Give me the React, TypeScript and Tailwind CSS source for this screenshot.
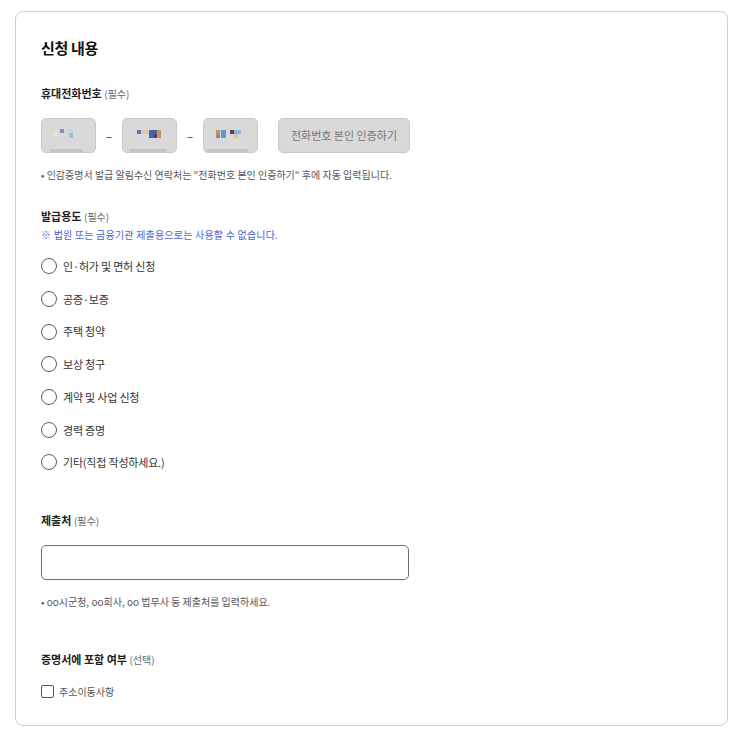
import React from 'react';

const font = { fontFamily: '"Noto Sans CJK KR", "Noto Sans", sans-serif' };

type Px = [number, number, number, number, string];

// blurred / redacted number previews inside the phone fields
const blur: { px: Px[]; line: [number, number] }[] = [
    {
        px: [
            [12, 12, 4, 5, '#ebe3c6'],
            [18, 10, 4, 4, '#9d86b6'],
            [25, 10, 6, 4, '#b9dde3'],
            [27, 14, 4, 5, '#8fc8d6'],
        ],
        line: [8, 41],
    },
    {
        px: [
            [14, 11, 4, 4, '#4f77b8'],
            [18, 11, 8, 4, '#e2c7a0'],
            [26, 11, 8, 4, '#3d64a3'],
            [26, 15, 4, 4, '#3f68b0'],
            [30, 15, 4, 4, '#7a3474'],
            [34, 11, 4, 8, '#c99657'],
        ],
        line: [6, 44],
    },
    {
        px: [
            [12, 11, 4, 5, '#c49056'],
            [12, 16, 4, 3, '#8a8a8a'],
            [17, 11, 5, 8, '#5e98d2'],
            [26, 11, 4, 4, '#7d2f58'],
            [30, 11, 7, 4, '#83b6e2'],
            [30, 15, 4, 4, '#e6c58c'],
        ],
        line: [2, 44],
    },
];

function BlurBox({ px, line }: { px: Px[]; line: [number, number] }) {
    return (
        <div className="h-[35px] w-[55px] overflow-hidden rounded-[5px] border border-[#c9c9c9] bg-[#d9d9d9]">
            <svg width="55" height="35" viewBox="0 0 55 35" className="block">
                {px.map(([x, y, w, h, c], i) => (
                    <rect key={i} x={x} y={y} width={w} height={h} fill={c} />
                ))}
                <rect x={line[0]} y={30} width={line[1] - line[0]} height={3} fill="#c6c6c6" />
            </svg>
        </div>
    );
}

const purposes = ['인·허가 및 면허 신청', '공증·보증', '주택 청약', '보상 청구', '계약 및 사업 신청', '경력 증명', '기타(직접 작성하세요.)'];

function Label({ title, note }: { title: string; note: string }) {
    return (
        <p className="text-[11px] leading-[16px] font-bold text-[#222]">
            {title} <span className="text-[10px] font-normal text-[#666]">({note})</span>
        </p>
    );
}

export default function App() {
    return (
        <div className="min-h-[733px] bg-white pt-[11px] pl-[15px]" style={font}>
            <div className="w-[713px] rounded-[8px] border border-[#cfcfcf] px-[25px] pt-[26px] pb-[25px]">
                {/* Title */}
                <h2 className="text-[15px] leading-[20px] font-bold text-[#111] tracking-[-0.3px]">신청 내용</h2>

                {/* Phone */}
                <div className="mt-[27px]">
                    <Label title="휴대전화번호" note="필수" />
                    <div className="mt-[16px] flex items-center">
                        <BlurBox {...blur[0]} />
                        <span className="w-[26px] text-center text-[12px] text-[#333]">–</span>
                        <BlurBox {...blur[1]} />
                        <span className="w-[26px] text-center text-[12px] text-[#333]">–</span>
                        <BlurBox {...blur[2]} />
                        <button className="ml-[20px] h-[35px] w-[132px] rounded-[5px] border border-[#c9c9c9] bg-[#d9d9d9] text-[11px] text-[#767676]">
                            전화번호 본인 인증하기
                        </button>
                    </div>
                    <p className="mt-[15px] text-[10px] leading-[14px] text-[#555]">
                        • 인감증명서 발급 알림수신 연락처는 "전화번호 본인 인증하기" 후에 자동 입력됩니다.
                    </p>
                </div>

                {/* Purpose */}
                <div className="mt-[26px]">
                    <Label title="발급용도" note="필수" />
                    <p className="mt-[3px] text-[10px] leading-[14px] text-[#4b63d2] tracking-[0.2px]">
                        ※ 법원 또는 금융기관 제출용으로는 사용할 수 없습니다.
                    </p>
                    <div className="mt-[8px]">
                        {purposes.map((p) => (
                            <label key={p} className="flex h-[32.7px] items-center gap-[6px]">
                                <span className="h-[16px] w-[16px] rounded-full border-[1.5px] border-[#5a5a5a] bg-white" />
                                <span className="text-[11px] text-[#333] tracking-[-0.2px]">{p}</span>
                            </label>
                        ))}
                    </div>
                </div>

                {/* Submit to */}
                <div className="mt-[33px]">
                    <Label title="제출처" note="필수" />
                    <div className="mt-[16px] h-[35px] w-[368px] rounded-[5px] border border-[#6b6b6b] bg-white" />
                    <p className="mt-[15px] text-[10px] leading-[14px] text-[#555]">
                        • oo시군청, oo회사, oo 법무사 등 제출처를 입력하세요.
                    </p>
                </div>

                {/* Include */}
                <div className="mt-[42px]">
                    <Label title="증명서에 포함 여부" note="선택" />
                    <label className="mt-[16px] flex items-center gap-[5px]">
                        <span className="h-[13px] w-[13px] rounded-[2px] border border-[#555] bg-white" />
                        <span className="text-[10px] leading-[16px] text-[#555]">주소이동사항</span>
                    </label>
                </div>
            </div>
        </div>
    );
}
